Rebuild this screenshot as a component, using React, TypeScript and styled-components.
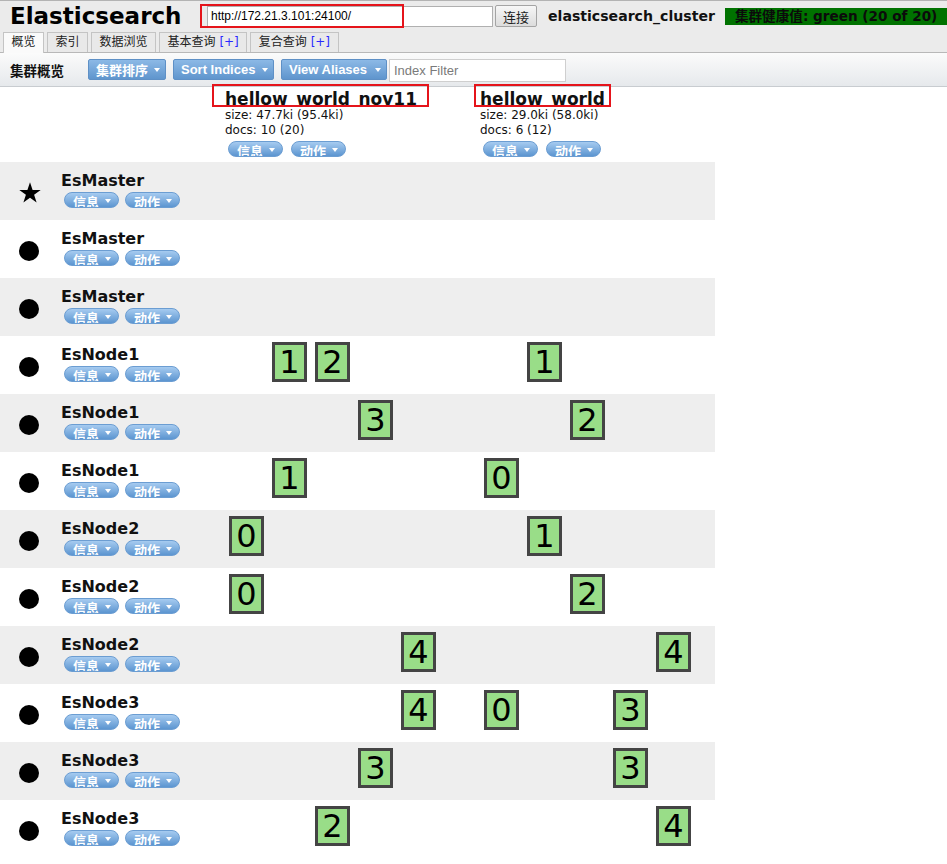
import React from "react";
import styled, { createGlobalStyle } from "styled-components";

const GlobalStyle = createGlobalStyle`
  html, body { margin: 0; padding: 0; background: #fff; }
  body {
    font-family: "DejaVu Sans", "Noto Sans CJK SC", sans-serif;
    font-size: 12px;
    color: #000;
    overflow: hidden;
  }
`;

const Page = styled.div`
  width: 947px;
  min-height: 864px;
`;

const Header = styled.header`
  background: #ebebeb;
  border-top: 1px solid #b3b3b3;
`;

const TopBar = styled.div`
  display: flex;
  align-items: center;
  height: 30px;
  white-space: nowrap;
  overflow: hidden;
`;

const Logo = styled.h1`
  margin: 0;
  flex: 0 0 207px;
  box-sizing: border-box;
  padding-left: 10px;
  font: bold 23px "DejaVu Sans", sans-serif;
  line-height: 30px;
`;

const ConnectForm = styled.div`
  position: relative;
  display: flex;
  align-items: center;
  height: 22px;
`;

const UrlInput = styled.input`
  box-sizing: border-box;
  width: 286px;
  height: 21px;
  margin: 0;
  padding: 0 3px;
  border: 1px solid #b0b0b0;
  background: #fff;
  font: 12px "Liberation Sans", Arial, sans-serif;
  color: #000;
  outline: none;
`;

const ConnectButton = styled.button`
  box-sizing: border-box;
  width: 42px;
  height: 22px;
  margin: 0 0 0 2px;
  padding: 0;
  border: 1px solid #a4a4a4;
  border-radius: 2px;
  background: linear-gradient(#f7f7f7, #dcdcdc);
  font: 13px "Noto Sans CJK SC", sans-serif;
  color: #222;
`;

const RedMark = styled.div<{ $l: number; $t: number; $w: number; $h: number }>`
  position: absolute;
  left: ${(p) => p.$l}px;
  top: ${(p) => p.$t}px;
  width: ${(p) => p.$w}px;
  height: ${(p) => p.$h}px;
  box-sizing: border-box;
  border: 2px solid #e5141b;
  pointer-events: none;
`;

const ClusterName = styled.span`
  margin-left: 11px;
  font: bold 14.1px "DejaVu Sans", sans-serif;
  color: #111;
`;

const HealthBadge = styled.span`
  flex: 0 0 auto;
  margin-left: 10px;
  height: 17px;
  padding: 0 10px;
  background: #007200;
  color: #0b0b0b;
  font: bold 13.6px "DejaVu Sans", "Noto Sans CJK SC", sans-serif;
  line-height: 17px;
`;

const Tabs = styled.nav`
  display: flex;
  align-items: flex-end;
  gap: 3px;
  height: 20px;
  margin-top: 1px;
  padding-left: 3px;
  border-bottom: 1px solid #b8b8b8;
`;

const Tab = styled.div<{ $active?: boolean }>`
  box-sizing: border-box;
  height: ${(p) => (p.$active ? 21 : 20)}px;
  margin-bottom: ${(p) => (p.$active ? -1 : 0)}px;
  padding: 0 7.5px;
  border: 1px solid #c4c4c4;
  border-bottom: none;
  background: ${(p) => (p.$active ? "#fafafa" : "#e9e9e9")};
  font: 12px "DejaVu Sans", "Noto Sans CJK SC", sans-serif;
  line-height: 19px;
  color: #222;
  white-space: nowrap;
`;

const Plus = styled.span`
  color: #2a2aff;
`;

const Toolbar = styled.div`
  display: flex;
  align-items: center;
  height: 33px;
  padding-left: 10px;
  background: linear-gradient(#fbfbfb, #e6e9ec);
  border-bottom: 1px solid #c8ccd0;
`;

const ToolLabel = styled.span`
  flex: 0 0 78px;
  font: bold 13.5px "Noto Sans CJK SC", sans-serif;
  color: #111;
`;

const ToolButton = styled.button<{ $w: number }>`
  box-sizing: border-box;
  display: flex;
  align-items: center;
  justify-content: space-between;
  width: ${(p) => p.$w}px;
  height: 21px;
  margin: 0 7px 0 0;
  padding: 0 5px 0 7px;
  border: 1px solid #5e90c6;
  border-radius: 2px;
  background: linear-gradient(#8cb9e6, #5f95cd);
  color: #fff;
  font: bold 13px "Liberation Sans", "Noto Sans CJK SC", sans-serif;
  &:last-of-type { margin-right: 2px; }
`;

const Caret = styled.span`
  display: inline-block;
  width: 0;
  height: 0;
  border-left: 3.5px solid transparent;
  border-right: 3.5px solid transparent;
  border-top: 4px solid #fff;
`;

const FilterInput = styled.input`
  box-sizing: border-box;
  width: 177px;
  height: 23px;
  margin: 1px 0 0 0;
  padding: 0 4px;
  border: 1px solid #cfcfcf;
  background: #fff;
  font: 13px "Liberation Sans", Arial, sans-serif;
  outline: none;
  &::placeholder { color: #7a7a7a; }
`;

const Overview = styled.section`
  width: 715px;
`;

const GridRow = styled.div<{ $shade?: boolean; $h: number }>`
  display: grid;
  grid-template-columns: 58px 167px 255px 235px;
  height: ${(p) => p.$h}px;
  background: ${(p) => (p.$shade ? "#eeeeee" : "#ffffff")};
`;

const IndexHead = styled.div`
  position: relative;
  padding-top: 3px;
`;

const IndexName = styled.h3`
  margin: 0 0 3px 0;
  height: 15px;
  overflow: hidden;
  white-space: nowrap;
  font: bold 17px "DejaVu Sans", sans-serif;
  line-height: 19px;
  color: #111;
`;

const Meta = styled.div`
  font: 12px "DejaVu Sans", sans-serif;
  line-height: 15px;
  color: #111;
`;

const PillRow = styled.div<{ $gap: number; $mt: number }>`
  display: flex;
  gap: ${(p) => p.$gap}px;
  margin-top: ${(p) => p.$mt}px;
  padding-left: 3px;
`;

const Pill = styled.span`
  box-sizing: border-box;
  display: inline-flex;
  align-items: flex-start;
  gap: 6px;
  height: 16px;
  padding: 2px 7px 0 8px;
  border: 1px solid #6b9dd2;
  border-radius: 8px;
  overflow: hidden;
  background: linear-gradient(#a6cbf0, #5c95d0);
  color: #fff;
  font: bold 13px "Noto Sans CJK SC", sans-serif;
  line-height: 13px;
  white-space: nowrap;
`;

const PillCaret = styled(Caret)`
  margin-top: 4px;
`;

const IconCell = styled.div`
  display: flex;
  justify-content: center;
  padding-top: 20px;
  padding-left: 1px;
`;

const Dot = styled.span`
  display: block;
  width: 20px;
  height: 20px;
  margin-top: 1px;
  margin-right: 1px;
  border-radius: 50%;
  background: #000;
`;

const NodeCell = styled.div`
  padding: 10px 0 0 3px;
`;

const NodeName = styled.div`
  font: bold 16px "DejaVu Sans", sans-serif;
  line-height: 18px;
  color: #111;
`;

const ShardCell = styled.div`
  display: grid;
  grid-template-columns: repeat(5, 43px);
  align-content: start;
  padding: 6px 0 0 4px;
`;

const Shard = styled.div<{ $slot: number }>`
  grid-column: ${(p) => p.$slot + 1};
  grid-row: 1;
  box-sizing: border-box;
  width: 35px;
  height: 40px;
  border: 3px solid #444;
  background: #99dd88;
  font: 32px "DejaVu Sans", sans-serif;
  line-height: 35px;
  text-align: center;
  color: #000;
  overflow: hidden;
`;

type Node = { name: string; master?: boolean; a: number[]; b: number[] };

const nodes: Node[] = [
  { name: "EsMaster", master: true, a: [], b: [] },
  { name: "EsMaster", a: [], b: [] },
  { name: "EsMaster", a: [], b: [] },
  { name: "EsNode1", a: [1, 2], b: [1] },
  { name: "EsNode1", a: [3], b: [2] },
  { name: "EsNode1", a: [1], b: [0] },
  { name: "EsNode2", a: [0], b: [1] },
  { name: "EsNode2", a: [0], b: [2] },
  { name: "EsNode2", a: [4], b: [4] },
  { name: "EsNode3", a: [4], b: [0, 3] },
  { name: "EsNode3", a: [3], b: [3] },
  { name: "EsNode3", a: [2], b: [4] },
];

const Star = () => (
  <svg width="22" height="21" viewBox="0 0 22 21">
    <polygon
      points="11,0.3 13.6,8 21.7,8 15.1,12.8 17.6,20.6 11,15.8 4.4,20.6 6.9,12.8 0.3,8 8.4,8"
      fill="#000"
    />
  </svg>
);

const Pills = ({ gap, mt }: { gap: number; mt: number }) => (
  <PillRow $gap={gap} $mt={mt}>
    <Pill>
      信息<PillCaret />
    </Pill>
    <Pill>
      动作<PillCaret />
    </Pill>
  </PillRow>
);

const Shards = ({ list }: { list: number[] }) => (
  <ShardCell>
    {list.map((n) => (
      <Shard key={n} $slot={n}>
        {n}
      </Shard>
    ))}
  </ShardCell>
);

export default function App() {
  return (
    <Page>
      <GlobalStyle />
      <Header>
        <TopBar>
          <Logo>Elasticsearch</Logo>
          <ConnectForm>
            <UrlInput readOnly value="http://172.21.3.101:24100/" />
            <ConnectButton>连接</ConnectButton>
            <RedMark $l={-7} $t={-1} $w={204} $h={24} />
          </ConnectForm>
          <ClusterName>elasticsearch_cluster</ClusterName>
          <HealthBadge>集群健康值: green (20 of 20)</HealthBadge>
        </TopBar>
        <Tabs>
          <Tab $active>概览</Tab>
          <Tab>索引</Tab>
          <Tab>数据浏览</Tab>
          <Tab>
            基本查询 <Plus>[+]</Plus>
          </Tab>
          <Tab>
            复合查询 <Plus>[+]</Plus>
          </Tab>
        </Tabs>
      </Header>
      <Toolbar>
        <ToolLabel>集群概览</ToolLabel>
        <ToolButton $w={78}>
          集群排序 <Caret />
        </ToolButton>
        <ToolButton $w={101}>
          Sort Indices <Caret />
        </ToolButton>
        <ToolButton $w={106}>
          View Aliases <Caret />
        </ToolButton>
        <FilterInput placeholder="Index Filter" />
      </Toolbar>
      <Overview>
        <GridRow $h={75}>
          <div />
          <div />
          <IndexHead>
            <IndexName>hellow_world_nov11</IndexName>
            <Meta>size: 47.7ki (95.4ki)</Meta>
            <Meta>docs: 10 (20)</Meta>
            <Pills gap={8} mt={3} />
            <RedMark $l={-13} $t={-3} $w={217} $h={23} />
          </IndexHead>
          <IndexHead>
            <IndexName>hellow_world</IndexName>
            <Meta>size: 29.0ki (58.0ki)</Meta>
            <Meta>docs: 6 (12)</Meta>
            <Pills gap={8} mt={3} />
            <RedMark $l={-6} $t={-3} $w={137} $h={23} />
          </IndexHead>
        </GridRow>
        {nodes.map((n, i) => (
          <GridRow key={i} $h={58} $shade={i % 2 === 0}>
            <IconCell>{n.master ? <Star /> : <Dot />}</IconCell>
            <NodeCell>
              <NodeName>{n.name}</NodeName>
              <Pills gap={6} mt={2} />
            </NodeCell>
            <Shards list={n.a} />
            <Shards list={n.b} />
          </GridRow>
        ))}
      </Overview>
    </Page>
  );
}
